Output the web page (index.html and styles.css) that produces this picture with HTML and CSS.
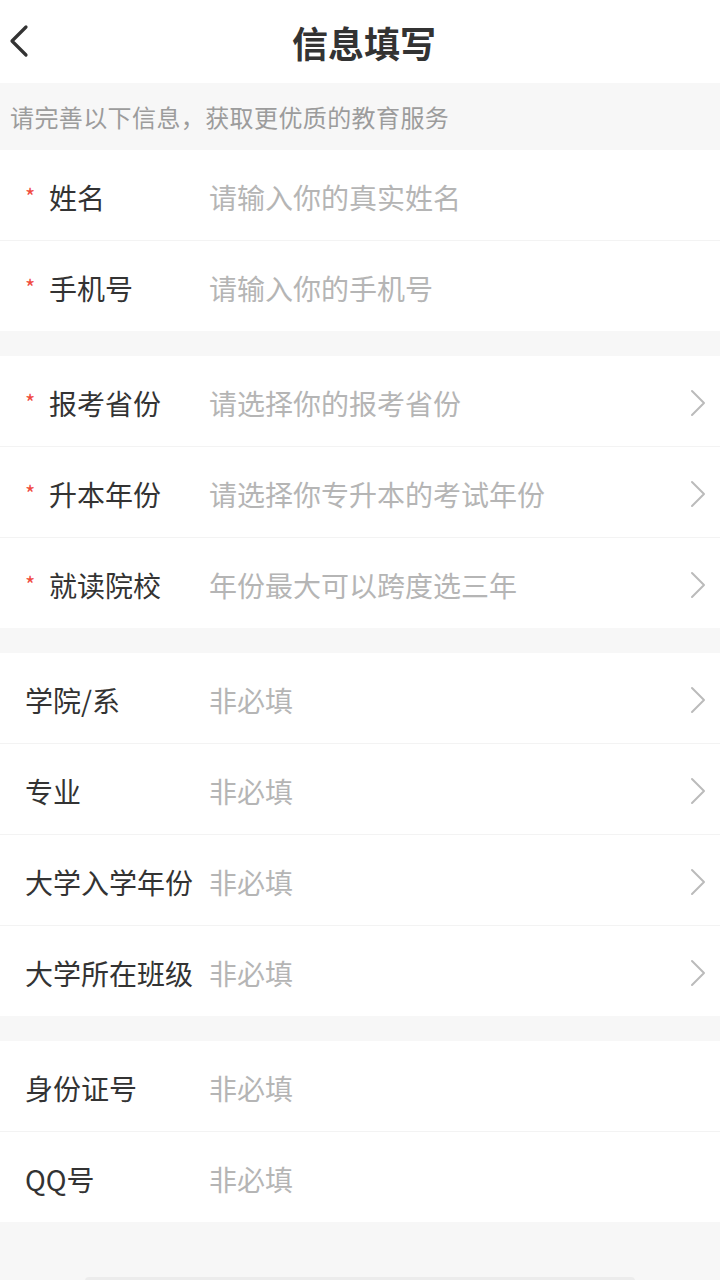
FILE: index.html
```html
<!DOCTYPE html>
<html lang="zh-CN">
<head>
<meta charset="utf-8">
<title>信息填写</title>
<link rel="stylesheet" href="styles.css">
</head>
<body>
<div class="page">
  <header class="nav">
    <svg class="back" width="24" height="34" viewBox="0 0 24 34"><path d="M19 3 L5 17 L19 31" fill="none" stroke="#333" stroke-width="3.2" stroke-linecap="round" stroke-linejoin="round"/></svg>
    <h1 class="title">信息填写</h1>
  </header>
  <div class="tip">请完善以下信息，获取更优质的教育服务</div>

  <section class="group">
    <div class="row"><span class="label"><i class="star">*</i>姓名</span><span class="ph">请输入你的真实姓名</span></div>
    <div class="row"><span class="label"><i class="star">*</i>手机号</span><span class="ph">请输入你的手机号</span></div>
  </section>

  <section class="group">
    <div class="row"><span class="label"><i class="star">*</i>报考省份</span><span class="ph">请选择你的报考省份</span><svg class="arrow" width="16" height="28" viewBox="0 0 16 28"><path d="M2 2 L14 14 L2 26" fill="none" stroke="#bbb" stroke-width="2" stroke-linecap="round" stroke-linejoin="round"/></svg></div>
    <div class="row"><span class="label"><i class="star">*</i>升本年份</span><span class="ph">请选择你专升本的考试年份</span><svg class="arrow" width="16" height="28" viewBox="0 0 16 28"><path d="M2 2 L14 14 L2 26" fill="none" stroke="#bbb" stroke-width="2" stroke-linecap="round" stroke-linejoin="round"/></svg></div>
    <div class="row"><span class="label"><i class="star">*</i>就读院校</span><span class="ph">年份最大可以跨度选三年</span><svg class="arrow" width="16" height="28" viewBox="0 0 16 28"><path d="M2 2 L14 14 L2 26" fill="none" stroke="#bbb" stroke-width="2" stroke-linecap="round" stroke-linejoin="round"/></svg></div>
  </section>

  <section class="group">
    <div class="row"><span class="label">学院/系</span><span class="ph">非必填</span><svg class="arrow" width="16" height="28" viewBox="0 0 16 28"><path d="M2 2 L14 14 L2 26" fill="none" stroke="#bbb" stroke-width="2" stroke-linecap="round" stroke-linejoin="round"/></svg></div>
    <div class="row"><span class="label">专业</span><span class="ph">非必填</span><svg class="arrow" width="16" height="28" viewBox="0 0 16 28"><path d="M2 2 L14 14 L2 26" fill="none" stroke="#bbb" stroke-width="2" stroke-linecap="round" stroke-linejoin="round"/></svg></div>
    <div class="row"><span class="label">大学入学年份</span><span class="ph">非必填</span><svg class="arrow" width="16" height="28" viewBox="0 0 16 28"><path d="M2 2 L14 14 L2 26" fill="none" stroke="#bbb" stroke-width="2" stroke-linecap="round" stroke-linejoin="round"/></svg></div>
    <div class="row"><span class="label">大学所在班级</span><span class="ph">非必填</span><svg class="arrow" width="16" height="28" viewBox="0 0 16 28"><path d="M2 2 L14 14 L2 26" fill="none" stroke="#bbb" stroke-width="2" stroke-linecap="round" stroke-linejoin="round"/></svg></div>
  </section>

  <section class="group">
    <div class="row"><span class="label">身份证号</span><span class="ph">非必填</span></div>
    <div class="row"><span class="label">QQ号</span><span class="ph">非必填</span></div>
  </section>

  <div class="footer"><div class="btn"></div></div>
</div>
</body>
</html>
```

FILE: styles.css
```css
* { box-sizing: border-box; }
html, body {
  margin: 0;
  padding: 0;
  height: 1280px;
  overflow: hidden;
  background: #f7f7f7;
  font-family: "Noto Sans CJK SC", "Noto Sans", sans-serif;
}
.page {
  display: flex;
  flex-direction: column;
  height: 1280px;
}
.page > * {
  flex: none;
}
.nav {
  position: relative;
  height: 83px;
  background: #fff;
  display: flex;
  align-items: center;
  justify-content: center;
}
.back {
  position: absolute;
  left: 7px;
  top: 24px;
}
.title {
  margin: 0 0 0 8px;
  font-size: 36px;
  font-weight: 700;
  color: #333;
  line-height: 1;
}
.tip {
  height: 67px;
  display: flex;
  align-items: center;
  padding-left: 10px;
  font-size: 24px;
  letter-spacing: 0.4px;
  color: #9c9c9c;
}
.group {
  background: #fff;
  margin-bottom: 25px;
}
.row {
  height: 91px;
  display: flex;
  align-items: center;
  padding-left: 25px;
  padding-right: 14px;
  padding-top: 3px;
  border-bottom: 1px solid #f3f3f3;
}
.row:last-child {
  height: 90px;
  border-bottom: none;
}
.label {
  width: 184px;
  flex: none;
  font-size: 28px;
  font-weight: 400;
  color: #333;
  white-space: nowrap;
  display: flex;
  align-items: center;
}
.star {
  font-style: normal;
  width: 24px;
  color: #f04a3e;
  font-size: 22px;
  position: relative;
  top: -2px;
}
.ph {
  flex: 1;
  font-size: 28px;
  color: #b5b5b5;
  white-space: nowrap;
}
.arrow {
  flex: none;
}
.footer {
  margin-top: -25px;
  height: 58px;
  display: flex;
  justify-content: center;
  padding-top: 55px;
  overflow: hidden;
}
.btn {
  width: 550px;
  height: 40px;
  flex: none;
  background: #ececec;
  border-radius: 4px;
}
```
